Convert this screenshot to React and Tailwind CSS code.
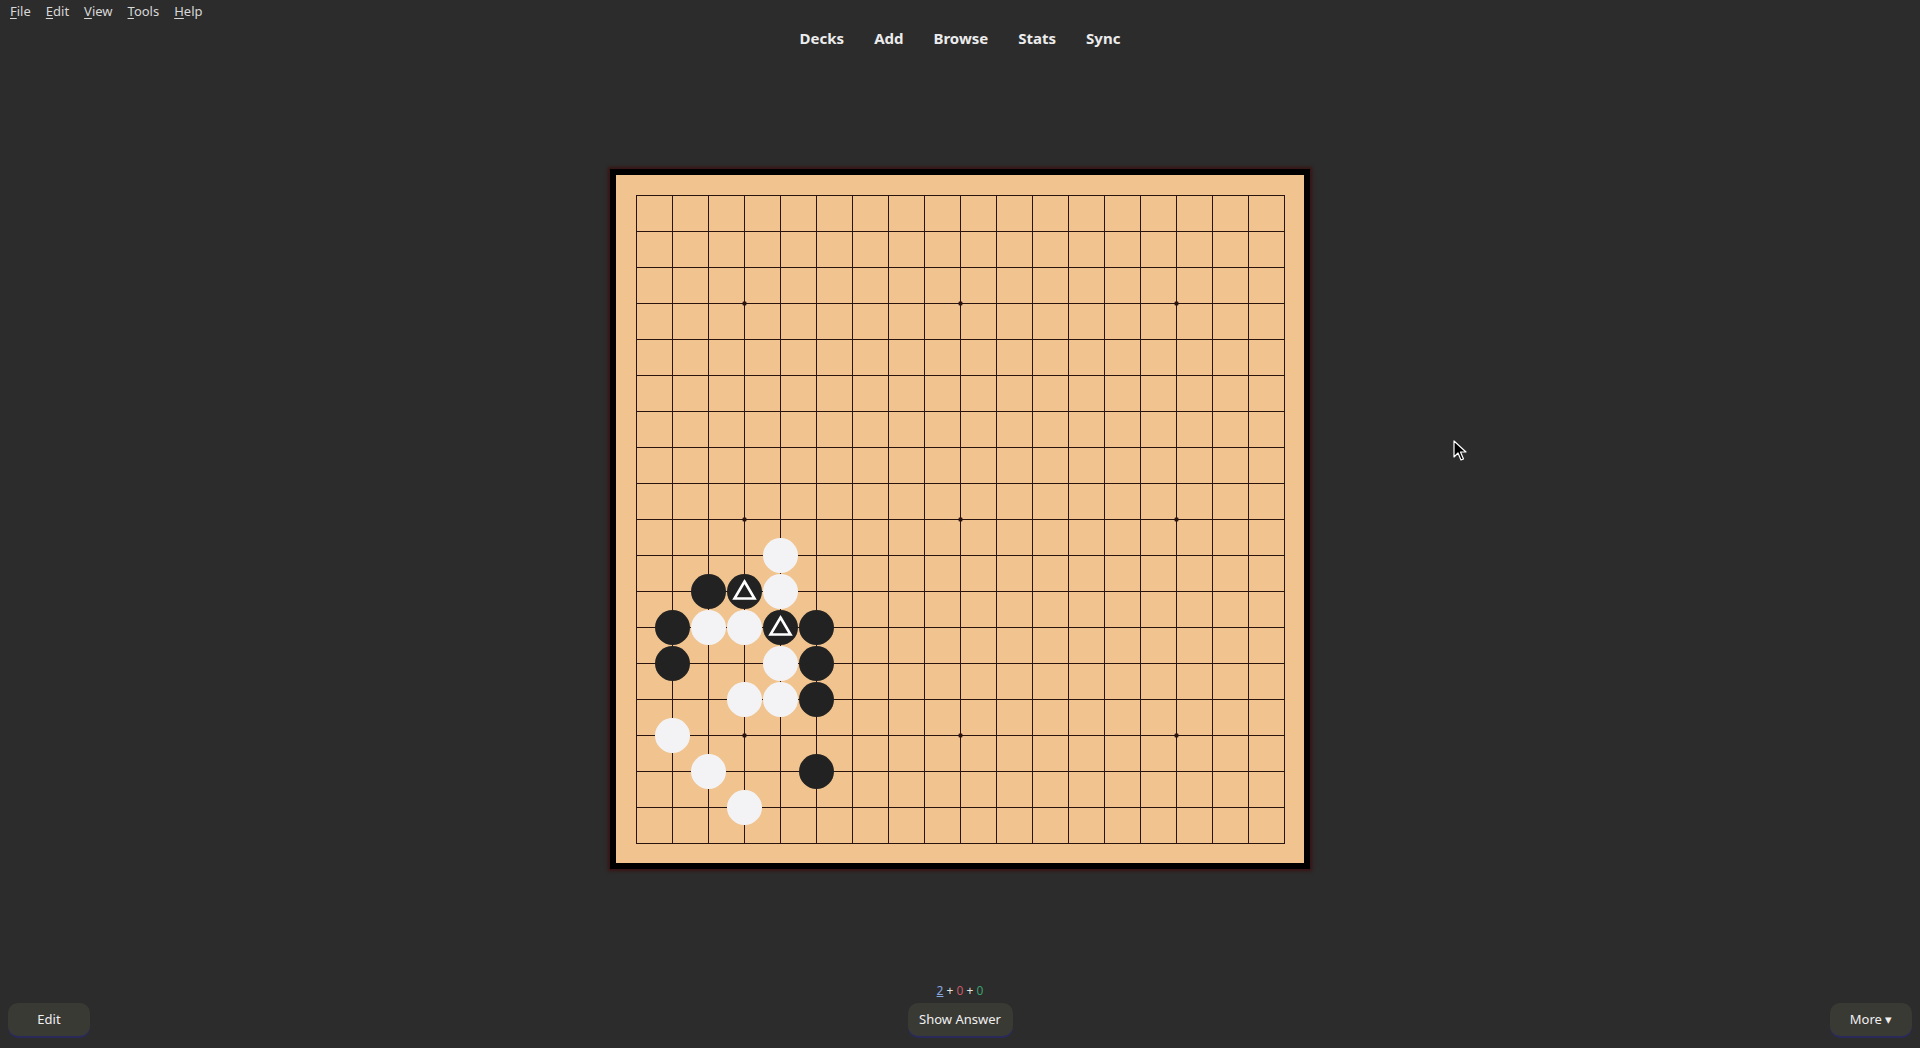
import React from 'react';

const SIZE = 19;
const STEP = 36;
const PAD = 20;

const stars = [3, 9, 15];

// [col, row, color, marked]
const stones = [
  [4, 10, 'w'],
  [2, 11, 'b'],
  [3, 11, 'b', true],
  [4, 11, 'w'],
  [1, 12, 'b'],
  [2, 12, 'w'],
  [3, 12, 'w'],
  [4, 12, 'b', true],
  [5, 12, 'b'],
  [1, 13, 'b'],
  [4, 13, 'w'],
  [5, 13, 'b'],
  [3, 14, 'w'],
  [4, 14, 'w'],
  [5, 14, 'b'],
  [1, 15, 'w'],
  [2, 16, 'w'],
  [5, 16, 'b'],
  [3, 17, 'w'],
];

const Board = () => {
  const span = STEP * (SIZE - 1);
  const lines = [];
  for (let i = 0; i < SIZE; i++) {
    const p = PAD + i * STEP + 0.5;
    lines.push(<line key={'h' + i} x1={PAD} y1={p} x2={PAD + span + 1} y2={p} />);
    lines.push(<line key={'v' + i} x1={p} y1={PAD} x2={p} y2={PAD + span + 1} />);
  }

  return (
    <svg width="688" height="688" className="block">
      <g stroke="#2a1410" strokeWidth="1">{lines}</g>
      {stars.map((c) =>
        stars.map((r) => (
          <circle key={c + '-' + r} cx={PAD + c * STEP + 0.5} cy={PAD + r * STEP + 0.5} r="2.2" fill="#2a1410" />
        ))
      )}
      {stones.map(([c, r, color, marked]) => {
        const cx = PAD + c * STEP + 0.5;
        const cy = PAD + r * STEP + 0.5;
        return (
          <g key={c + ':' + r}>
            <circle cx={cx} cy={cy} r="17.5" fill={color === 'b' ? '#222222' : '#f3f3f5'} />
            {marked && (
              <polygon
                points={`${cx},${cy - 10} ${cx + 10},${cy + 7} ${cx - 10},${cy + 7}`}
                fill="none"
                stroke="#ffffff"
                strokeWidth="2.6"
                strokeLinejoin="miter"
              />
            )}
          </g>
        );
      })}
    </svg>
  );
};

const MenuItem = ({ label }) => (
  <span className="px-[5px]">
    <span className="underline underline-offset-2">{label[0]}</span>
    {label.slice(1)}
  </span>
);

const PillButton = ({ children, className = '' }) => (
  <button
    className={
      'h-[33px] rounded-[10px] bg-[#3a3a35] text-[13px] text-[#f0f0f0] shadow-[0_2px_0_#2a2a5a] ' + className
    }
  >
    {children}
  </button>
);

const App = () => {
  return (
    <div
      className="relative flex h-[1048px] w-full flex-col overflow-hidden bg-[#2c2c2c] text-[#e6e6e6]"
      style={{ fontFamily: '"Noto Sans", "Open Sans", sans-serif' }}
    >
      <div className="flex h-[24px] items-center pl-[5px] text-[13px] text-[#d8d8d8] gap-[5px]">
        {['File', 'Edit', 'View', 'Tools', 'Help'].map((m) => (
          <MenuItem key={m} label={m} />
        ))}
      </div>

      <nav className="flex h-[28px] items-center justify-center gap-[30px] text-[15px] font-bold text-[#ececec]">
        <span>Decks</span>
        <span>Add</span>
        <span>Browse</span>
        <span>Stats</span>
        <span>Sync</span>
      </nav>

      <div className="mt-[117px] flex justify-center">
        <div className="border-[6px] border-black bg-[#f0c38f] shadow-[0_0_3px_2px_#3a1414]">
          <Board />
        </div>
      </div>

      <div className="flex-1" />

      <div className="flex items-end justify-between px-[8px] pb-[12px]">
        <PillButton className="w-[82px]">Edit</PillButton>
        <div className="flex flex-col items-center gap-[4px]">
          <div className="text-[12px] leading-[16px] text-[#e0e0e0]">
            <span className="text-[#8aa8e0] underline">2</span>
            <span> + </span>
            <span className="text-[#c85a6a]">0</span>
            <span> + </span>
            <span className="text-[#3aa070]">0</span>
          </div>
          <PillButton className="w-[105px]">Show Answer</PillButton>
        </div>
        <PillButton className="w-[82px]">More ▾</PillButton>
      </div>

      <svg className="absolute left-[1453px] top-[440px]" width="16" height="22" viewBox="0 0 16 22">
        <path d="M1 1 L1 17 L5 13 L8 20 L10.5 19 L7.5 12 L13 12 Z" fill="#000" stroke="#fff" strokeWidth="1.2" strokeLinejoin="round" />
      </svg>
    </div>
  );
};

export default App;
